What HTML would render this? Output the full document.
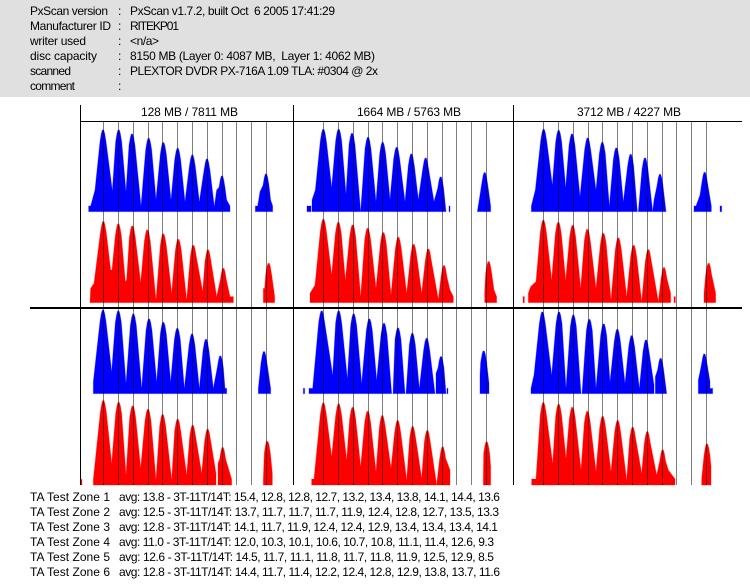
<!DOCTYPE html>
<html>
<head>
<meta charset="utf-8">
<title>PxScan report</title>
<style>
html,body{margin:0;padding:0;background:#fff;width:750px;height:584px;overflow:hidden}
svg{display:block}
text{font-family:"Liberation Sans",Arial,sans-serif;font-size:12px;fill:#000;white-space:pre}
.b{fill:#0000ff;stroke:#b4b4ff;stroke-width:3;paint-order:stroke fill}
.r{fill:#ff0000;stroke:#ffb0b0;stroke-width:3;paint-order:stroke fill}
</style>
</head>
<body>
<svg width="750" height="584" viewBox="0 0 750 584" xmlns="http://www.w3.org/2000/svg">
<rect x="0" y="0" width="750" height="97" fill="#e0e0e0"/>

<text x="30" y="15" textLength="78">PxScan version</text><text x="118" y="15">:</text><text x="130" y="15" textLength="205">PxScan v1.7.2, built Oct  6 2005 17:41:29</text>
<text x="30" y="30" textLength="81">Manufacturer ID</text><text x="118" y="30">:</text><text x="130" y="30" textLength="49">RITEKP01</text>
<text x="30" y="45" textLength="56">writer used</text><text x="118" y="45">:</text><text x="130" y="45" textLength="29">&lt;n/a&gt;</text>
<text x="30" y="60" textLength="67">disc capacity</text><text x="118" y="60">:</text><text x="130" y="60" textLength="245">8150 MB (Layer 0: 4087 MB,  Layer 1: 4062 MB)</text>
<text x="30" y="75" textLength="41">scanned</text><text x="118" y="75">:</text><text x="130" y="75" textLength="248">PLEXTOR DVDR PX-716A 1.09 TLA: #0304 @ 2x</text>
<text x="30" y="90" textLength="45">comment</text><text x="118" y="90">:</text>

<text x="141" y="116" textLength="97">128 MB / 7811 MB</text>
<text x="357" y="116" textLength="104">1664 MB / 5763 MB</text>
<text x="577" y="116" textLength="104">3712 MB / 4227 MB</text>

<g transform="translate(70,100) scale(.33333)">
<path class="b" d="M56,335V318H62L75,270L90,124l4-24l3-10h4l3 10l4 24L127,272L137,124l4-24l3-10h4l3 10l4 24L168,275L177,136l4-24l3-10h4l3 10l4 24L213,318L227,149l4-24l3-10h4l3 10l4 24L258,298L271,162l4-24l3-10h4l3 10l4 24L303,300L314,179l4-24l3-10h4l3 10l4 24L345,305L358,199l4-24l3-10h4l3 10l4 24L388,305L402,211l4-24l3-10h4l3 10l4 24L433,320L440,270L447,262l4-24l3-10h4l3 10l4 24L470,300L480,318V335Z"/>
<path class="b" d="M556,335V318H563L570,275L579,256l4-24l3-10h4l3 10l4 24L602,300L608,318V335Z"/>
<path class="b" d="M712,335V318H720V335Z"/>
<path class="r" d="M60,608L62,565L72,550L91,399l4-24l3-10h4l3 10l4 24L122,510L126,510L136,406l4-24l3-10h4l3 10l4 24L166,545L170,540L178,412l4-24l3-10h4l3 10l4 24L212,548L223,424l4-24l3-10h4l3 10l4 24L258,600L271,436l4-24l3-10h4l3 10l4 24L305,580L316,452l4-24l3-10h4l3 10l4 24L350,600L361,470l4-24l3-10h4l3 10l4 24L398,575L405,484l4-24l3-10h4l3 10l4 24L440,590L451,539l4-24l3-10h4l3 10l4 24L480,590H490V608Z"/>
<path class="r" d="M580,608V565H584L587,524l4-24l3-10h4l3 10l4 24L614,590V608Z"/>
</g>

<g transform="translate(290,100) scale(.33333)">
<path class="b" d="M51,335V318H63V335Z"/>
<path class="b" d="M66,335V300L76,270L91,122l4-24l3-10h4l3 10l4 24L125,262L137,122l4-24l3-10h4l3 10l4 24L168,282L177,134l4-24l3-10h4l3 10l4 24L212,335L225,146l4-24l3-10h4l3 10l4 24L258,305L269,161l4-24l3-10h4l3 10l4 24L300,298L311,176l4-24l3-10h4l3 10l4 24L345,305L355,196l4-24l3-10h4l3 10l4 24L385,298L398,208l4-24l3-10h4l3 10l4 24L432,305L443,265l4-24l3-10h4l3 10l4 24L468,335Z"/>
<path class="b" d="M477,335V318H480V335Z"/>
<path class="b" d="M562,335L570,285L575,252l4-24l3-10h4l3 10l4 24L602,318V335Z"/>
<path class="r" d="M60,608V580L75,555L91,392l4-24l3-10h4l3 10l4 24L125,525L136,401l4-24l3-10h4l3 10l4 24L166,540L179,409l4-24l3-10h4l3 10l4 24L212,590L224,419l4-24l3-10h4l3 10l4 24L258,565L271,432l4-24l3-10h4l3 10l4 24L303,585L316,446l4-24l3-10h4l3 10l4 24L350,580L362,467l4-24l3-10h4l3 10l4 24L395,580L406,481l4-24l3-10h4l3 10l4 24L445,598L453,531l4-24l3-10h4l3 10l4 24L480,570L490,590V608Z"/>
<path class="r" d="M584,608V575L587,519l4-24l3-10h4l3 10l4 24L612,570L620,590V608Z"/>
<path class="r" d="M699,608V590H703V608Z"/>
<path class="r" d="M715,608V578H720V608Z"/>
</g>

<g transform="translate(510,100) scale(.33333)">
<path class="b" d="M64,335V318L76,270L92,122l4-24l3-10h4l3 10l4 24L127,255L137,125l4-24l3-10h4l3 10l4 24L167,262L177,136l4-24l3-10h4l3 10l4 24L210,290L224,148l4-24l3-10h4l3 10l4 24L258,270L268,161l4-24l3-10h4l3 10l4 24L298,318L310,178l4-24l3-10h4l3 10l4 24L340,305L353,197l4-24l3-10h4l3 10l4 24L382,335H385L396,208l4-24l3-10h4l3 10l4 24L428,335L432,300L441,257l4-24l3-10h4l3 10l4 24L468,335Z"/>
<path class="b" d="M552,335V318H558L570,285L575,251l4-24l3-10h4l3 10l4 24L604,318V335Z"/>
<path class="b" d="M630,335V318H635V335Z"/>
<path class="r" d="M55,608V580L62,560L78,545L91,395l4-24l3-10h4l3 10l4 24L125,540L136,401l4-24l3-10h4l3 10l4 24L167,540L179,410l4-24l3-10h4l3 10l4 24L212,565L223,422l4-24l3-10h4l3 10l4 24L258,565L271,434l4-24l3-10h4l3 10l4 24L303,600L316,448l4-24l3-10h4l3 10l4 24L350,590L362,470l4-24l3-10h4l3 10l4 24L395,605L406,483l4-24l3-10h4l3 10l4 24L445,605L453,537l4-24l3-10h4l3 10l4 24L482,580V608Z"/>
<path class="r" d="M582,608V580L587,524l4-24l3-10h4l3 10l4 24L617,580V608Z"/>
<path class="r" d="M39,608V590H43V608Z"/>
<path class="r" d="M492,608V590H496V608Z"/>
</g>

<g transform="translate(60,300) scale(.33333)">
<path class="b" d="M100,281V245L120,64l4-24l3-10h4l3 10l4 24L155,215L166,67l4-24l3-10h4l3 10l4 24L198,250L211,76l4-24l3-10h4l3 10l4 24L245,265L258,91l4-24l3-10h4l3 10l4 24L290,245L301,101l4-24l3-10h4l3 10l4 24L332,245L343,119l4-24l3-10h4l3 10l4 24L373,265L387,136l4-24l3-10h4l3 10l4 24L418,265L429,152l4-24l3-10h4l3 10l4 24L460,265L472,202l4-24l3-10h4l3 10l4 24L495,265H500V281Z"/>
<path class="b" d="M595,281V265L603,189l4-24l3-10h4l3 10l4 24L632,265V281Z"/>
<path class="r" d="M100,555V538L121,336l4-24l3-10h4l3 10l4 24L155,490L167,341l4-24l3-10h4l3 10l4 24L198,525L209,352l4-24l3-10h4l3 10l4 24L242,505L255,362l4-24l3-10h4l3 10l4 24L288,540L299,378l4-24l3-10h4l3 10l4 24L335,540L344,392l4-24l3-10h4l3 10l4 24L380,525L389,410l4-24l3-10h4l3 10l4 24L425,520L434,422l4-24l3-10h4l3 10l4 24L468,520V555H474V490L479,477l4-24l3-10h4l3 10l4 24L515,538V555Z"/>
<path class="r" d="M610,555V538L613,458l4-24l3-10h4l3 10l4 24L637,520V555Z"/>
<path class="r" d="M62,555V538H66V555Z"/>
</g>

<g transform="translate(290,300) scale(.33333)">
<path class="b" d="M40,281V265H44V281Z"/>
<path class="b" d="M57,281V265H68L86,67l4-24l3-10h4l3 10l4 24L128,225L137,67l4-24l3-10h4l3 10l4 24L172,235L182,76l4-24l3-10h4l3 10l4 24L215,250L229,91l4-24l3-10h4l3 10l4 24L260,240L273,104l4-24l3-10h4l3 10l4 24L305,281H309L315,118l4-24l3-10h4l3 10l4 24L345,281H348L358,134l4-24l3-10h4l3 10l4 24L388,265L401,149l4-24l3-10h4l3 10l4 24L435,281H438V220L444,204l4-24l3-10h4l3 10l4 24L468,281Z"/>
<path class="b" d="M471,281V265H474V281Z"/>
<path class="b" d="M570,281V225L572,187l4-24l3-10h4l3 10l4 24L597,250V281Z"/>
<path class="r" d="M65,555V537H72L91,343l4-24l3-10h4l3 10l4 24L125,470L137,346l4-24l3-10h4l3 10l4 24L170,480L179,356l4-24l3-10h4l3 10l4 24L212,500L224,368l4-24l3-10h4l3 10l4 24L258,515L268,381l4-24l3-10h4l3 10l4 24L303,505L314,396l4-24l3-10h4l3 10l4 24L350,540L359,414l4-24l3-10h4l3 10l4 24L395,535L403,426l4-24l3-10h4l3 10l4 24L440,555L449,475l4-24l3-10h4l3 10l4 24L480,510V555Z"/>
<path class="r" d="M580,555V537L581,460l4-24l3-10h4l3 10l4 24L602,500V555Z"/>
</g>

<g transform="translate(510,300) scale(.33333)">
<path class="b" d="M63,281V265L72,225L88,70l4-24l3-10h4l3 10l4 24L125,225L138,70l4-24l3-10h4l3 10l4 24L168,265L181,79l4-24l3-10h4l3 10l4 24L213,281H216L229,92l4-24l3-10h4l3 10l4 24L258,265L272,106l4-24l3-10h4l3 10l4 24L300,245L313,122l4-24l3-10h4l3 10l4 24L345,250L356,141l4-24l3-10h4l3 10l4 24L388,265L399,154l4-24l3-10h4l3 10l4 24L432,255V281H436V230L443,209l4-24l3-10h4l3 10l4 24L470,281Z"/>
<path class="b" d="M565,281V240L574,196l4-24l3-10h4l3 10l4 24L600,245V265H608V281Z"/>
<path class="r" d="M65,555V537H78L91,342l4-24l3-10h4l3 10l4 24L128,490L137,347l4-24l3-10h4l3 10l4 24L168,475L178,356l4-24l3-10h4l3 10l4 24L213,510L223,368l4-24l3-10h4l3 10l4 24L258,515L269,383l4-24l3-10h4l3 10l4 24L303,515L314,396l4-24l3-10h4l3 10l4 24L350,540L359,416l4-24l3-10h4l3 10l4 24L395,520L403,429l4-24l3-10h4l3 10l4 24L440,525L449,484l4-24l3-10h4l3 10l4 24L475,510L495,537V555Z"/>
<path class="r" d="M575,555V537L582,466l4-24l3-10h4l3 10l4 24L603,500V555Z"/>
</g>

<g fill="#000" fill-opacity=".5">
<rect x="103" y="121" width="1" height="364"/><rect x="118" y="121" width="1" height="364"/><rect x="133" y="121" width="1" height="364"/><rect x="148" y="121" width="1" height="364"/><rect x="162" y="121" width="1" height="364"/><rect x="177" y="121" width="1" height="364"/><rect x="192" y="121" width="1" height="364"/><rect x="207" y="121" width="1" height="364"/><rect x="222" y="121" width="1" height="364"/><rect x="236" y="121" width="1" height="364"/><rect x="251" y="121" width="1" height="364"/><rect x="266" y="121" width="1" height="364"/>
<rect x="323" y="121" width="1" height="364"/><rect x="338" y="121" width="1" height="364"/><rect x="353" y="121" width="1" height="364"/><rect x="368" y="121" width="1" height="364"/><rect x="382" y="121" width="1" height="364"/><rect x="397" y="121" width="1" height="364"/><rect x="412" y="121" width="1" height="364"/><rect x="427" y="121" width="1" height="364"/><rect x="442" y="121" width="1" height="364"/><rect x="456" y="121" width="1" height="364"/><rect x="471" y="121" width="1" height="364"/><rect x="486" y="121" width="1" height="364"/>
<rect x="543" y="121" width="1" height="364"/><rect x="558" y="121" width="1" height="364"/><rect x="573" y="121" width="1" height="364"/><rect x="588" y="121" width="1" height="364"/><rect x="602" y="121" width="1" height="364"/><rect x="617" y="121" width="1" height="364"/><rect x="632" y="121" width="1" height="364"/><rect x="647" y="121" width="1" height="364"/><rect x="662" y="121" width="1" height="364"/><rect x="676" y="121" width="1" height="364"/><rect x="691" y="121" width="1" height="364"/><rect x="706" y="121" width="1" height="364"/>
</g>

<rect x="80" y="105" width="1" height="380" fill="#000"/>
<rect x="293" y="105" width="1" height="380" fill="#000"/>
<rect x="513" y="105" width="1" height="380" fill="#000"/>
<rect x="80" y="121" width="662" height="1" fill="#000"/>
<rect x="30" y="307" width="712" height="2" fill="#000"/>

<text x="30" y="501" textLength="80">TA Test Zone 1</text><text x="119" y="501" textLength="381">avg: 13.8 - 3T-11T/14T: 15.4, 12.8, 12.8, 12.7, 13.2, 13.4, 13.8, 14.1, 14.4, 13.6</text>
<text x="30" y="516" textLength="80">TA Test Zone 2</text><text x="119" y="516" textLength="380">avg: 12.5 - 3T-11T/14T: 13.7, 11.7, 11.7, 11.7, 11.9, 12.4, 12.8, 12.7, 13.5, 13.3</text>
<text x="30" y="531" textLength="80">TA Test Zone 3</text><text x="119" y="531" textLength="379">avg: 12.8 - 3T-11T/14T: 14.1, 11.7, 11.9, 12.4, 12.4, 12.9, 13.4, 13.4, 13.4, 14.1</text>
<text x="30" y="546" textLength="80">TA Test Zone 4</text><text x="119" y="546" textLength="375">avg: 11.0 - 3T-11T/14T: 12.0, 10.3, 10.1, 10.6, 10.7, 10.8, 11.1, 11.4, 12.6, 9.3</text>
<text x="30" y="561" textLength="80">TA Test Zone 5</text><text x="119" y="561" textLength="375">avg: 12.6 - 3T-11T/14T: 14.5, 11.7, 11.1, 11.8, 11.7, 11.8, 11.9, 12.5, 12.9, 8.5</text>
<text x="30" y="576" textLength="80">TA Test Zone 6</text><text x="119" y="576" textLength="381">avg: 12.8 - 3T-11T/14T: 14.4, 11.7, 11.4, 12.2, 12.4, 12.8, 12.9, 13.8, 13.7, 11.6</text>
</svg>
</body>
</html>
